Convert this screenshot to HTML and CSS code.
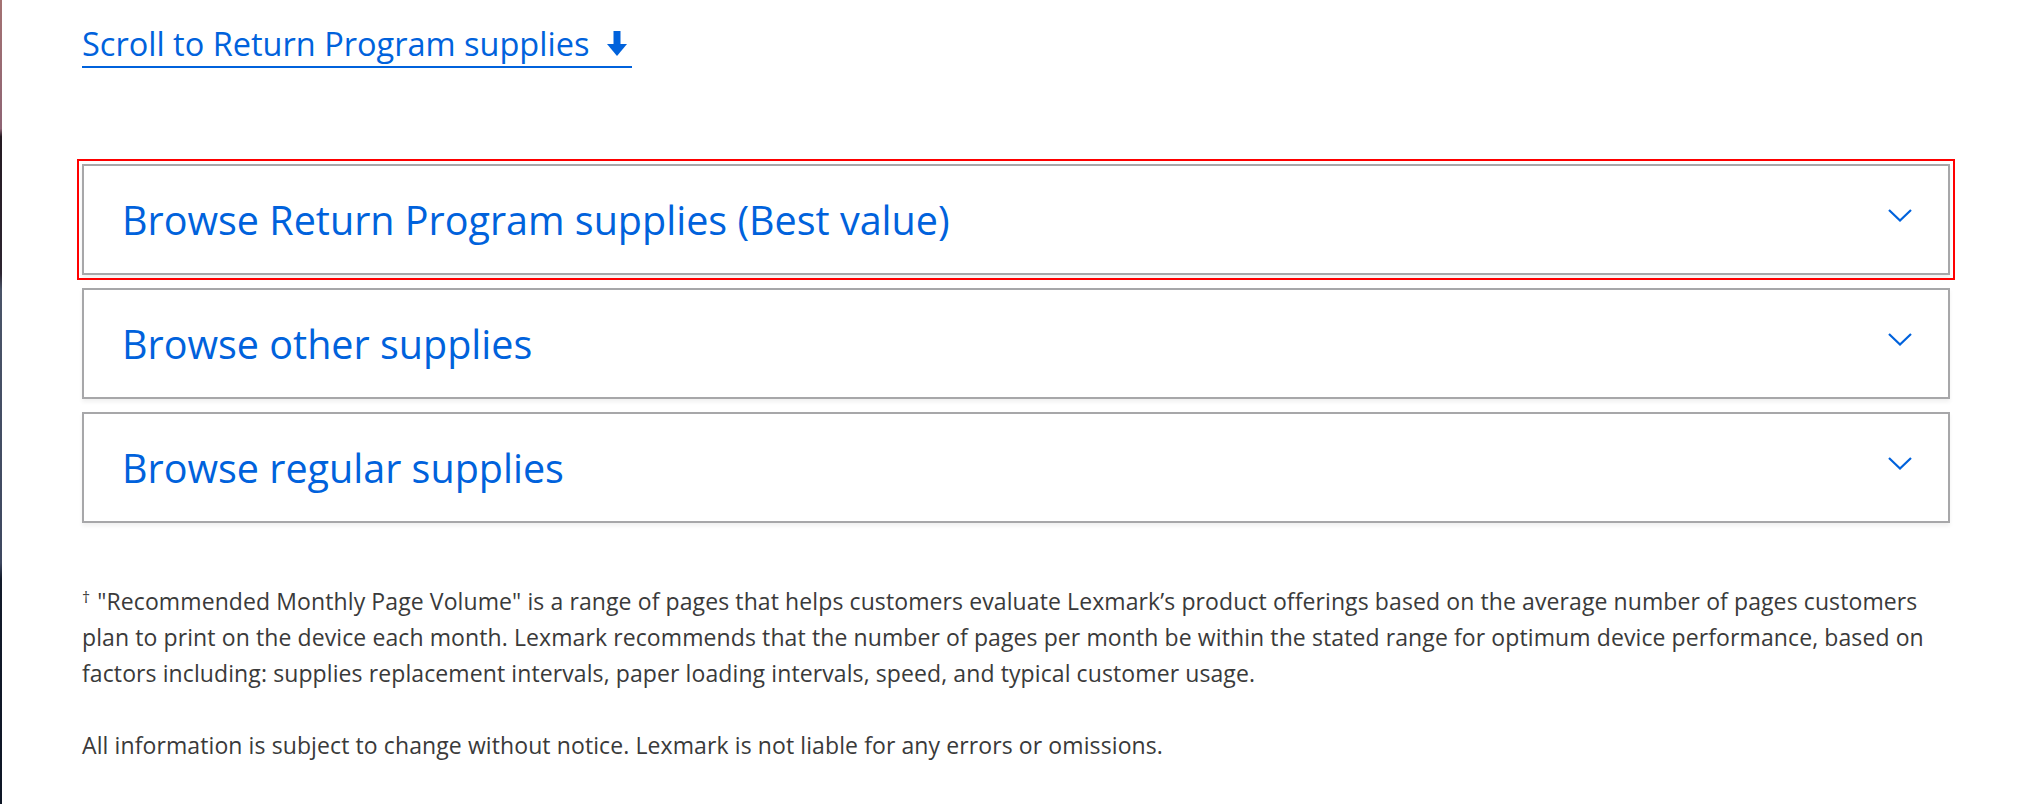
FILE: index.html
```html
<!DOCTYPE html>
<html lang="en">
<head>
  <meta charset="UTF-8">
  <meta name="viewport" content="width=device-width, initial-scale=1.0">
  <title>Supplies</title>
  <link rel="stylesheet" href="styles.css">
</head>
<body>
  <main class="supplies">
    <a class="scroll-link" href="#return-program">Scroll to Return Program supplies<svg class="scroll-arrow" width="20" height="25" viewBox="0 0 20 25"><rect x="6.5" y="0" width="7" height="15" fill="currentColor"/><polygon points="0,13 20,13 10,25" fill="currentColor"/></svg></a>

    <div class="accordion">
      <button class="accordion-item focused" id="return-program">
        <span class="accordion-title">Browse Return Program supplies (Best value)</span>
        <svg class="chevron" width="24" height="13" viewBox="0 0 24 13"><polyline points="1,1 12,11.5 23,1" fill="none" stroke="currentColor" stroke-width="2.2"/></svg>
      </button>
      <button class="accordion-item">
        <span class="accordion-title">Browse other supplies</span>
        <svg class="chevron" width="24" height="13" viewBox="0 0 24 13"><polyline points="1,1 12,11.5 23,1" fill="none" stroke="currentColor" stroke-width="2.2"/></svg>
      </button>
      <button class="accordion-item">
        <span class="accordion-title">Browse regular supplies</span>
        <svg class="chevron" width="24" height="13" viewBox="0 0 24 13"><polyline points="1,1 12,11.5 23,1" fill="none" stroke="currentColor" stroke-width="2.2"/></svg>
      </button>
    </div>

    <div class="footnotes">
      <p><sup>&dagger;</sup>"Recommended Monthly Page Volume" is a range of pages that helps customers evaluate Lexmark’s product offerings based on the average number of pages customers plan to print on the device each month. Lexmark recommends that the number of pages per month be within the stated range for optimum device performance, based on factors including: supplies replacement intervals, paper loading intervals, speed, and typical customer usage.</p>
      <p>All information is subject to change without notice. Lexmark is not liable for any errors or omissions.</p>
    </div>
  </main>
</body>
</html>
```

FILE: styles.css
```css
body {
  margin: 0;
  height: 804px;
  box-sizing: border-box;
  padding: 25px 80px 0 82px;
  font-family: "Open Sans", Lato, sans-serif;
  color: #3a3a3a;
  background:
    linear-gradient(#a47272 0%, #8e6474 16%, #241a22 17%, #2c2430 34%, #4a5468 36%, #3e4860 70%, #121a2a 72%, #0e1626 100%) left top / 2px 100% no-repeat,
    #ffffff;
  overflow: hidden;
}

.supplies {
  display: flex;
  flex-direction: column;
  align-items: flex-start;
}

.scroll-link {
  display: inline-flex;
  align-items: baseline;
  gap: 18px;
  font-size: 32.5px;
  line-height: 38px;
  color: #0062dc;
  text-decoration: none;
  padding-right: 5px;
  padding-bottom: 3px;
  border-bottom: 2px solid #0062dc;
}

.scroll-arrow {
  display: block;
}

.accordion {
  align-self: stretch;
  margin-top: 96px;
  display: flex;
  flex-direction: column;
  gap: 13px;
}

.accordion-item {
  display: flex;
  align-items: center;
  justify-content: space-between;
  height: 111px;
  box-sizing: border-box;
  padding: 0 36px 0 38px;
  background: #fff;
  border: 2px solid #a7a7a9;
  box-shadow: 0 3px 4px rgba(0, 0, 0, 0.06);
  font-family: inherit;
  cursor: pointer;
  text-align: left;
}

.accordion-item.focused {
  outline: 2px solid #ff0000;
  outline-offset: 3px;
}

.accordion-title {
  font-size: 39.5px;
  color: #0062dc;
}

.chevron {
  color: #0062dc;
  margin-bottom: 8px;
}

.footnotes {
  margin-top: 60px;
  font-size: 23px;
  line-height: 36px;
  letter-spacing: 0.1px;
}

.footnotes p {
  margin: 0 0 36px;
}

.footnotes sup {
  display: inline-block;
  font-size: 16px;
  line-height: 16px;
  vertical-align: 7px;
  margin-right: 7px;
}
```
